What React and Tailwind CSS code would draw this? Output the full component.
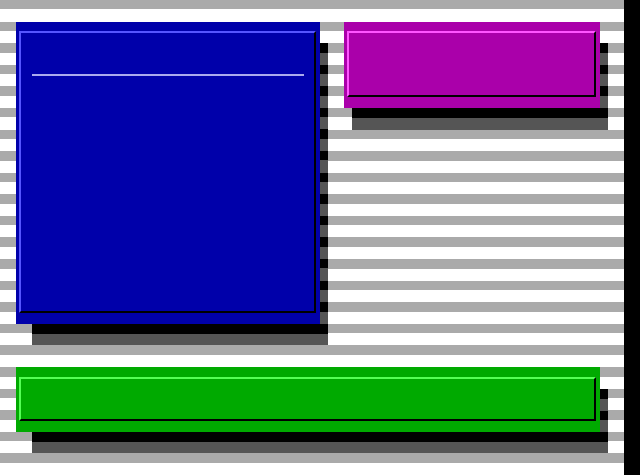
import React from 'react';

// stripes line up with the 22 text rows of the screen (475 / 22)
const stripes =
  'bg-[repeating-linear-gradient(180deg,#aaaaaa_0px,#aaaaaa_9.5px,#ffffff_9.5px,#ffffff_21.5909px)] bg-fixed';
const shade =
  'bg-[repeating-linear-gradient(180deg,#000000_0px,#000000_9.5px,#555555_9.5px,#555555_21.5909px)] bg-fixed';

function Frame({ light, children }) {
  return (
    <div className="h-full pt-[9.5px] pb-[11px] pl-[3px] pr-[4px]">
      <div className={`h-full border-2 border-r-black border-b-black ${light}`}>{children}</div>
    </div>
  );
}

function App() {
  return (
    <div className="w-[640px] h-[475px] flex overflow-hidden">
      <div
        className={`w-[624px] h-[475px] grid grid-cols-[repeat(78,8px)] grid-rows-[repeat(22,minmax(0,1fr))] ${stripes}`}
      >
        {/* blue panel */}
        <div className="col-start-3 col-end-41 row-start-2 row-end-16 bg-[#0000aa]">
          <Frame light="border-t-[#5555ff] border-l-[#5555ff]">
            <div className="mt-[41px] ml-[11px] mr-[10px] h-[2px] bg-[#aaaaee]" />
          </Frame>
        </div>
        <div className={`col-start-41 col-end-42 row-start-3 row-end-16 ${shade}`} />
        <div className={`col-start-5 col-end-42 row-start-16 row-end-17 ${shade}`} />

        {/* magenta panel */}
        <div className="col-start-44 col-end-76 row-start-2 row-end-6 bg-[#aa00aa]">
          <Frame light="border-t-[#ff55ff] border-l-[#ff55ff]" />
        </div>
        <div className={`col-start-76 col-end-77 row-start-3 row-end-6 ${shade}`} />
        <div className={`col-start-45 col-end-77 row-start-6 row-end-7 ${shade}`} />

        {/* green panel */}
        <div className="col-start-3 col-end-76 row-start-18 row-end-21 bg-[#00aa00]">
          <Frame light="border-t-[#55ff55] border-l-[#55ff55]" />
        </div>
        <div className={`col-start-76 col-end-77 row-start-19 row-end-21 ${shade}`} />
        <div className={`col-start-5 col-end-77 row-start-21 row-end-22 ${shade}`} />
      </div>
      <div className="w-[16px] h-[475px] bg-black" />
    </div>
  );
}

export default App;
